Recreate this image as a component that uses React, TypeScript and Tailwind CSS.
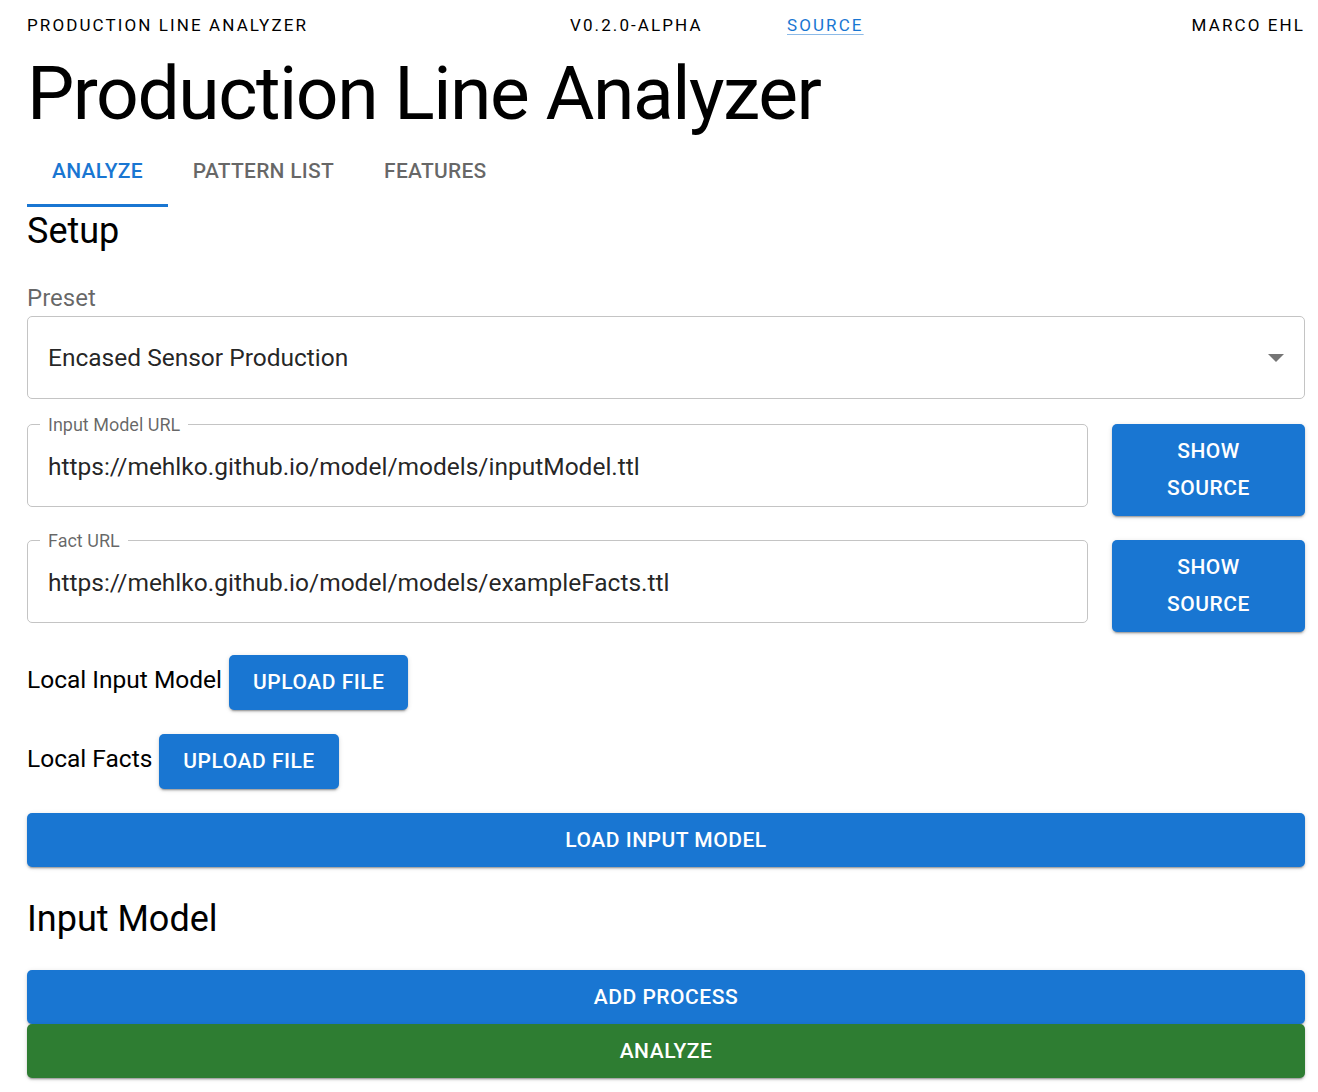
import React from 'react';

const btnBase =
  'rounded-[5px] text-white font-medium uppercase tracking-[0.025em] text-[21px] shadow-[0_3px_1px_-2px_rgba(0,0,0,0.2),0_2px_2px_0_rgba(0,0,0,0.14),0_1px_5px_0_rgba(0,0,0,0.12)]';
const btn = `${btnBase} bg-[#1976d2]`;

function OutlinedField({ label, value }: { label: string; value: string }) {
  return (
    <div className="relative flex-1 h-[83px] rounded-[5px] border border-[#c4c4c4] flex items-center px-[20px] pt-[3px]">
      <span className="absolute left-[12px] top-0 -translate-y-1/2 bg-white px-[8px] text-[18px] leading-[20px] text-[rgba(0,0,0,0.6)]">
        {label}
      </span>
      <span className="text-[24.5px] text-[rgba(0,0,0,0.87)]">{value}</span>
    </div>
  );
}

function UrlRow({ label, value }: { label: string; value: string }) {
  return (
    <div className="flex gap-[24px] items-start">
      <OutlinedField label={label} value={value} />
      <button className={`${btn} w-[193px] h-[92px] leading-[37px]`}>
        Show
        <br />
        Source
      </button>
    </div>
  );
}

function UploadRow({ label }: { label: string }) {
  return (
    <div className="flex items-center">
      <span className="text-[24.5px] leading-[28px] pr-[7px] pb-[5px]">{label}</span>
      <button className={`${btn} h-[55px] px-[24px]`}>Upload File</button>
    </div>
  );
}

export default function App() {
  const tabs = ['Analyze', 'Pattern List', 'Features'];
  return (
    <div className="min-h-screen bg-white pl-[27px] pr-[13px] font-['Roboto',sans-serif] text-black">
      <header className="flex items-center h-[51px] text-[17px] uppercase tracking-[2.1px]">
        <span className="w-[543px]">Production Line Analyzer</span>
        <span className="w-[217px]">v0.2.0-alpha</span>
        <a href="#" className="text-[#1976d2] underline underline-offset-[3px] decoration-[rgba(25,118,210,0.5)]">
          Source
        </a>
        <span className="ml-auto">Marco Ehl</span>
      </header>

      <h1 className="h-[84px] text-[75px] leading-[84px] tracking-[-1.45px]">Production Line Analyzer</h1>

      <nav className="flex h-[72px]">
        {tabs.map((t, i) => (
          <div
            key={t}
            className={`relative flex items-center pt-[2px] px-[25px] text-[21px] font-medium uppercase tracking-[0.012em] ${
              i === 0 ? 'text-[#1976d2]' : 'text-[rgba(0,0,0,0.6)]'
            }`}
          >
            {t}
            {i === 0 && <span className="absolute left-0 right-0 bottom-0 h-[3px] bg-[#1976d2]" />}
          </div>
        ))}
      </nav>

      <h2 className="h-[48px] text-[36px] leading-[48px]">Setup</h2>

      <div className="mt-[30px] text-[24px] leading-[26px] text-[rgba(0,0,0,0.6)]">Preset</div>
      <div className="mt-[5px] h-[83px] rounded-[5px] border border-[#c4c4c4] flex items-center px-[20px]">
        <span className="flex-1 pt-[2px] text-[24.5px] text-[rgba(0,0,0,0.87)]">Encased Sensor Production</span>
        <svg width="16" height="8" viewBox="0 0 10 5">
          <path d="M0 0l5 5 5-5z" fill="rgba(0,0,0,0.54)" />
        </svg>
      </div>

      <div className="mt-[25px] flex flex-col gap-[24px]">
        <UrlRow label="Input Model URL" value="https://mehlko.github.io/model/models/inputModel.ttl" />
        <UrlRow label="Fact URL" value="https://mehlko.github.io/model/models/exampleFacts.ttl" />
      </div>

      <div className="mt-[23px] flex flex-col gap-[24px]">
        <UploadRow label="Local Input Model" />
        <UploadRow label="Local Facts" />
      </div>

      <button className={`${btn} mt-[24px] w-full h-[54px] pt-[2px]`}>Load Input Model</button>

      <h2 className="mt-[30px] h-[44px] text-[36px] leading-[44px]">Input Model</h2>

      <div className="mt-[29px] flex flex-col pb-[14px]">
        <button className={`${btn} w-full h-[54px] pt-[2px]`}>Add Process</button>
        <button className={`${btnBase} bg-[#2e7d32] w-full h-[54px] pt-[2px]`}>Analyze</button>
      </div>
    </div>
  );
}
